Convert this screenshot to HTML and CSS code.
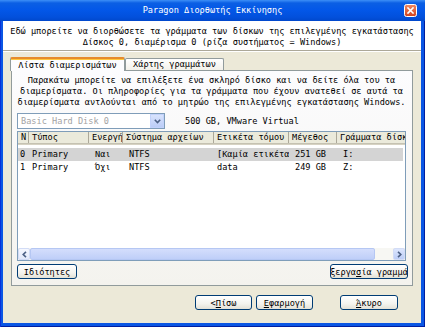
FILE: index.html
```html
<!DOCTYPE html>
<html lang="el">
<head>
    <meta charset="UTF-8">
    <meta name="viewport" content="width=device-width, initial-scale=1.0">
    <title>Paragon Διορθωτής Εκκίνησης</title>
    <link rel="stylesheet" href="styles.css">
</head>
<body>
    <div class="window">
        <div class="titlebar">
            <span class="title">Paragon Διορθωτής Εκκίνησης</span>
            <span class="close">
                <svg width="13" height="13" viewBox="0 0 13 13">
                    <defs>
                        <linearGradient id="cl" x1="0" y1="0" x2="0" y2="1">
                            <stop offset="0" stop-color="#f08a63"/>
                            <stop offset="1" stop-color="#d2401b"/>
                        </linearGradient>
                    </defs>
                    <rect x="0.5" y="0.5" width="12" height="12" rx="2" fill="url(#cl)" stroke="#fff"/>
                    <path d="M4 4 L9 9 M9 4 L4 9" stroke="#fff" stroke-width="1.6" stroke-linecap="square"/>
                </svg>
            </span>
        </div>

        <div class="dialog">
            <div class="header">
                <p>Εδώ μπορείτε να διορθώσετε τα γράμματα των δίσκων της επιλεγμένης εγκατάστασης</p>
                <p>Δίσκος 0, διαμέρισμα 0 (ρίζα συστήματος = Windows)</p>
            </div>

            <div class="content">
                <div class="tabs">
                    <div class="tab active">Λίστα διαμερισμάτων</div>
                    <div class="tab">Χάρτης γραμμάτων</div>
                </div>
                <div class="panel">
                    <p class="intro">Παρακάτω μπορείτε να επιλέξετε ένα σκληρό δίσκο και να δείτε όλα του τα<br>διαμερίσματα. Οι πληροφορίες για τα γράμματα που έχουν ανατεθεί σε αυτά τα<br>διαμερίσματα αντλούνται από το μητρώο της επιλεγμένης εγκατάστασης Windows.</p>

                    <div class="disk-row">
                        <div class="combo">
                            <span class="combo-text">Basic Hard Disk 0</span>
                            <span class="combo-btn">
                                <svg width="7" height="5" viewBox="0 0 7 5"><polyline points="0.8,0.8 3.5,3.6 6.2,0.8" fill="none" stroke="#4d6185" stroke-width="1.6"/></svg>
                            </span>
                        </div>
                        <span class="disk-info">500 GB, VMware Virtual</span>
                    </div>

                    <div class="listview">
                        <div class="lv-head">
                            <span class="c1">N</span>
                            <span class="c2">Τύπος</span>
                            <span class="c3">Ενεργή</span>
                            <span class="c4">Σύστημα αρχείων</span>
                            <span class="c5">Ετικέτα τόμου</span>
                            <span class="c6">Μέγεθος</span>
                            <span class="c7">Γράμματα δίσκων</span>
                        </div>
                        <div class="lv-body">
                            <div class="lv-row selected">
                                <span class="c1">0</span>
                                <span class="c2">Primary</span>
                                <span class="c3">Ναι</span>
                                <span class="c4">NTFS</span>
                                <span class="c5">[Καμία ετικέτα]</span>
                                <span class="c6">251 GB</span>
                                <span class="c7">I:</span>
                            </div>
                            <div class="lv-row">
                                <span class="c1">1</span>
                                <span class="c2">Primary</span>
                                <span class="c3">Όχι</span>
                                <span class="c4">NTFS</span>
                                <span class="c5">data</span>
                                <span class="c6">249 GB</span>
                                <span class="c7">Z:</span>
                            </div>
                        </div>
                        <div class="hscroll">
                            <span class="arrow left">
                                <svg width="5" height="7" viewBox="0 0 5 7"><polyline points="4,0.8 1.2,3.5 4,6.2" fill="none" stroke="#4d6185" stroke-width="1.6"/></svg>
                            </span>
                            <span class="thumb"></span>
                            <span class="track"></span>
                            <span class="arrow right">
                                <svg width="5" height="7" viewBox="0 0 5 7"><polyline points="1,0.8 3.8,3.5 1,6.2" fill="none" stroke="#4d6185" stroke-width="1.6"/></svg>
                            </span>
                        </div>
                    </div>

                    <div class="panel-buttons">
                        <button class="btn props">Ιδιότητες</button>
                        <button class="btn edit"><span>Επεξεργα<u>σ</u>ία γραμμάτων</span></button>
                    </div>
                </div>
            </div>

            <div class="footer">
                <button class="btn">&lt; <u>Π</u>ίσω</button>
                <button class="btn"><u>Ε</u>φαρμογή</button>
                <button class="btn cancel"><u>Ά</u>κυρο</button>
            </div>
        </div>
    </div>
</body>
</html>
```

FILE: styles.css
```css
body {
    margin: 0;
    font-family: "DejaVu Sans Mono", monospace;
    font-size: 8.6px;
    color: #000;
    background: #fff;
}

p {
    margin: 0;
}

.window {
    width: 425px;
    height: 327px;
    display: flex;
    flex-direction: column;
    background: #0a56e4;
    box-shadow: inset 1px 0 0 #0831d9, inset -1px 0 0 #001ea0, inset 0 -1px 0 #001ea0;
}

.titlebar {
    height: 21px;
    display: grid;
    grid-template-columns: 1fr auto 1fr;
    align-items: center;
    color: #fff;
    background: linear-gradient(#3d8ff7, #0b5fe4 3px, #0357e8 10px, #0250dc 17px, #0148cc 21px);
}

.title {
    grid-column: 2;
    padding-bottom: 1px;
}

.close {
    grid-column: 3;
    justify-self: end;
    margin-right: 8px;
    height: 13px;
}

.dialog {
    flex: 1;
    margin: 0 4px 4px 3px;
    background: #ece9d8;
    display: flex;
    flex-direction: column;
}

.header {
    background: #fff;
    text-align: center;
    line-height: 11px;
    padding: 5px 0 2px;
    border-bottom: 1px solid #aca899;
    box-shadow: 0 1px 0 #fff;
    white-space: nowrap;
}

.content {
    flex: 1;
    display: flex;
    flex-direction: column;
    padding: 6px 8px 0 8px;
}

.tabs {
    display: flex;
    align-items: flex-end;
    height: 13px;
    margin-left: -1px;
}

.tab {
    height: 11px;
    line-height: 11px;
    width: 97px;
    text-align: center;
    border: 1px solid #919b9c;
    border-bottom: none;
    border-radius: 2px 2px 0 0;
    background: linear-gradient(#ffffff, #f3f1ea);
}

.tab.active {
    position: relative;
    z-index: 1;
    width: 113px;
    height: 12px;
    line-height: 12px;
    margin-bottom: -1px;
    border-top: 2px solid #e68b2c;
    box-shadow: inset 0 1px 0 #ffc73c;
    background: #fcfcfe;
}

.panel {
    flex: 1;
    display: flex;
    flex-direction: column;
    border: 1px solid #919b9c;
    background: linear-gradient(#fcfcfe, #f4f3ee);
    padding: 4px 6px 6px 5px;
}

.intro {
    text-align: center;
    line-height: 11px;
    white-space: nowrap;
}

.disk-row {
    display: flex;
    align-items: center;
    margin-top: 5px;
}

.combo {
    width: 146px;
    height: 14px;
    border: 1px solid #7f9db9;
    background: #fff;
    display: flex;
    align-items: center;
    justify-content: space-between;
}

.combo-text {
    color: #a3a3a3;
    padding-left: 3px;
}

.combo-btn {
    width: 14px;
    height: 14px;
    display: flex;
    align-items: center;
    justify-content: center;
    background: linear-gradient(#dbe5fd, #b9cbf7);
    box-shadow: inset 0 0 0 1px #c2d2fb;
}

.disk-info {
    margin-left: 20px;
}

.listview {
    flex: 1;
    margin-top: 2px;
    border: 1px solid #7f9db9;
    background: #fff;
    display: flex;
    flex-direction: column;
    overflow: hidden;
}

.lv-head,
.lv-row {
    display: flex;
    white-space: nowrap;
}

.lv-head {
    height: 11px;
    line-height: 11px;
    background: #ebeadb;
    border-bottom: 1px solid #c5c2b2;
    box-shadow: 0 1px 0 #d6d2c2;
}

.lv-head span {
    flex: none;
    overflow: hidden;
    padding-left: 3px;
    box-sizing: border-box;
    border-right: 1px solid #aca899;
}

.lv-body {
    flex: 1;
    padding-top: 4px;
}

.lv-row {
    height: 13px;
    line-height: 13px;
}

.lv-row.selected {
    background: #d4d4d4;
    margin-right: 2px;
}

.lv-row span {
    flex: none;
    overflow: hidden;
    padding-left: 3px;
    box-sizing: border-box;
}

.c1 { width: 11px; }
.c2 { width: 60px; }
.c3 { width: 34px; }
.c4 { width: 91px; }
.c5 { width: 75px; }
.c6 { width: 48px; }
.c7 { width: 90px; }

.lv-row .c1 { padding-left: 2px; }
.lv-row .c3,
.lv-row .c4,
.lv-row .c6,
.lv-row .c7 { padding-left: 6px; }

.hscroll {
    height: 12px;
    display: flex;
    background: #f4f3ee;
}

.arrow {
    width: 12px;
    display: flex;
    align-items: center;
    justify-content: center;
    box-sizing: border-box;
    border: 1px solid #d2dcf6;
    border-radius: 2px;
}

.arrow.left {
    background: linear-gradient(#f6f8fe, #e2e9fb);
}

.arrow.right {
    background: linear-gradient(#dde6fd, #bccdf7);
}

.thumb {
    flex: 1;
    border: 1px solid #b5c7f3;
    border-radius: 2px;
    background: linear-gradient(#d4defc, #bfcff8);
}

.track {
    width: 18px;
    background: #f7f7f3;
}

.panel-buttons {
    display: flex;
    justify-content: space-between;
    margin-top: 3px;
}

.btn {
    height: 15px;
    padding: 0;
    font-family: inherit;
    font-size: 8.6px;
    color: #000;
    border: 1px solid #003c74;
    border-radius: 3px;
    background: linear-gradient(#ffffff, #f4f3ee 60%, #e3e1d6);
    display: flex;
    align-items: center;
    justify-content: center;
    overflow: hidden;
    white-space: nowrap;
}

.props {
    width: 60px;
}

.edit {
    width: 78px;
    margin-right: -2px;
}

.footer {
    height: 37px;
    box-sizing: border-box;
    display: flex;
    justify-content: flex-end;
    align-items: flex-start;
    gap: 4px;
    padding: 9px 23px 0 0;
}

.footer .btn {
    width: 57px;
}

.footer .cancel {
    width: 58px;
    margin-left: 23px;
}
```
